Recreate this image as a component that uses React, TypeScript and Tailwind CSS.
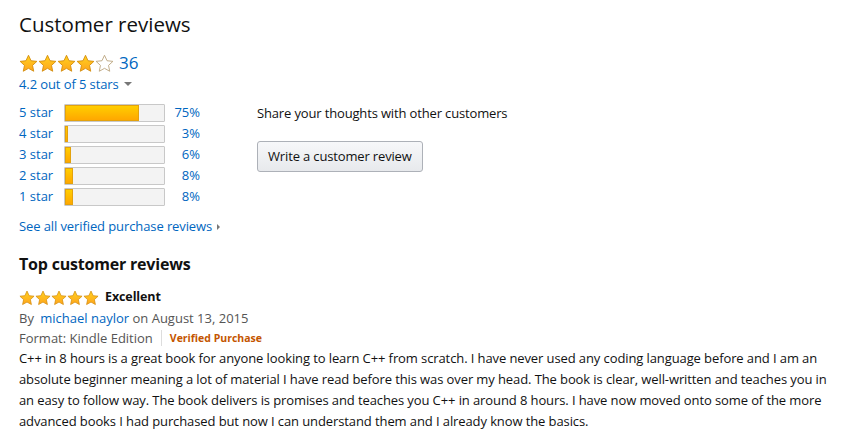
import React from 'react';

const font = { fontFamily: '"Open Sans", "Noto Sans", Arial, sans-serif' };

const Star: React.FC<{ size: number; filled: boolean; id: string }> = ({ size, filled, id }) => (
  <svg width={size} height={size} viewBox="0 0 24 24">
    <defs>
      <linearGradient id={id} x1="0" y1="0" x2="0" y2="1">
        <stop offset="0" stopColor="#ffd21f" />
        <stop offset="1" stopColor="#ffa41c" />
      </linearGradient>
    </defs>
    <path
      d="M12 1.6l3.2 6.9 7.4.8-5.5 5.1 1.5 7.4L12 18.1l-6.6 3.7 1.5-7.4-5.5-5.1 7.4-.8z"
      fill={filled ? `url(#${id})` : '#ffffff'}
      stroke={filled ? '#d28a0a' : '#b9a27a'}
      strokeWidth="1.1"
      strokeLinejoin="round"
    />
  </svg>
);

const bars = [
  { label: '5 star', pct: 75 },
  { label: '4 star', pct: 3 },
  { label: '3 star', pct: 6 },
  { label: '2 star', pct: 8 },
  { label: '1 star', pct: 8 },
];

export default function App() {
  return (
    <div className="w-[844px] h-[440px] overflow-hidden bg-white pl-[19px] pt-[10px] text-[#111]" style={font}>
      <h2 className="text-[20.5px] leading-[28px] font-normal">Customer reviews</h2>

      <div className="flex items-center mt-[13px] h-[24px]">
        <div className="flex">
          {[0, 1, 2, 3, 4].map((i) => (
            <Star key={i} size={19} filled={i < 4} id={`big${i}`} />
          ))}
        </div>
        <span className="ml-[5px] text-[17px] text-[#0066c0]">36</span>
      </div>
      <div className="flex items-center text-[13px] leading-[20px] text-[#0066c0] -mt-[1px] tracking-[-0.1px]">
        4.2 out of 5 stars
        <span className="ml-[5px] inline-block w-0 h-0 border-l-[4px] border-r-[4px] border-t-[4px] border-l-transparent border-r-transparent border-t-[#777]" />
      </div>

      <div className="flex mt-[8px]">
        <div className="w-[238px]">
          {bars.map((b) => (
            <div key={b.label} className="flex items-center h-[21px] text-[13px] text-[#0066c0]">
              <span className="w-[45px]">{b.label}</span>
              <div className="w-[101px] h-[18px] border border-[#c8c8c8] bg-[#f3f3f3] rounded-[1px] overflow-hidden">
                <div
                  className="h-full bg-gradient-to-b from-[#ffce00] to-[#ffa700] border border-[#e3a20d]"
                  style={{ width: `${b.pct}%` }}
                />
              </div>
              <span className="w-[35px] text-right">{b.pct}%</span>
            </div>
          ))}
          <div className="flex items-center text-[13px] text-[#0066c0] mt-[10px] tracking-[-0.1px]">
            See all verified purchase reviews
            <span className="ml-[5px] inline-block w-0 h-0 border-t-[3px] border-b-[3px] border-l-[3px] border-t-transparent border-b-transparent border-l-[#777]" />
          </div>
        </div>
        <div className="pt-[2px]">
          <div className="text-[13px] leading-[18px] tracking-[-0.15px]">Share your thoughts with other customers</div>
          <button className="mt-[19px] h-[31px] px-[10px] text-[13px] rounded-[3px] border border-[#adb1b8] bg-gradient-to-b from-[#f7f8fa] to-[#e7e9ec] text-[#111] tracking-[-0.15px]">
            Write a customer review
          </button>
        </div>
      </div>

      <h3 className="mt-[15px] text-[16px] leading-[24px] font-bold tracking-[-0.2px]">Top customer reviews</h3>
      <div className="flex items-center mt-[13px] h-[18px]">
        <div className="flex">
          {[0, 1, 2, 3, 4].map((i) => (
            <Star key={i} size={16} filled id={`sm${i}`} />
          ))}
        </div>
        <span className="ml-[6px] text-[12.5px] font-bold tracking-[-0.1px]">Excellent</span>
      </div>
      <div className="text-[13px] leading-[20px] text-[#555] mt-[1px]">
        By <span className="ml-[3px] text-[#0066c0]">michael naylor</span> on August 13, 2015
      </div>
      <div className="flex items-center text-[13px] leading-[20px] text-[#555]">
        Format: Kindle Edition
        <span className="mx-[8px] w-px h-[16px] bg-[#ddd]" />
        <span className="text-[10.5px] font-bold text-[#c45500]">Verified Purchase</span>
      </div>
      <p className="w-[818px] text-[13px] leading-[21.3px] text-[#111] tracking-[-0.1px]" style={{ fontStretch: '88%' }}>
        C++ in 8 hours is a great book for anyone looking to learn C++ from scratch. I have never used any coding language before and I am an absolute beginner meaning a lot of material I have read before this was over my head. The book is clear, well-written and teaches you in an easy to follow way. The book delivers is promises and teaches you C++ in around 8 hours. I have now moved onto some of the more advanced books I had purchased but now I can understand them and I already know the basics.
      </p>
    </div>
  );
}
